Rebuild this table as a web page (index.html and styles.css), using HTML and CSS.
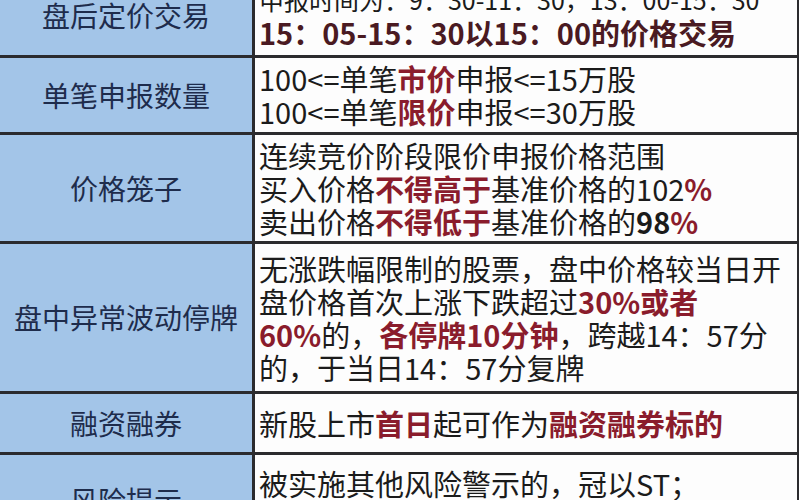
FILE: index.html
```html
<!DOCTYPE html>
<html lang="zh-CN">
<head>
<meta charset="utf-8">
<title>科创板交易规则</title>
<link rel="stylesheet" href="styles.css">
</head>
<body>
<div class="table">
  <div class="head">盘后定价交易</div>
  <div class="body">
    <div class="line small">申报时间为：9：30-11：30，13：00-15：30</div>
    <div class="line dark">15：05-15：30以15：00的价格交易</div>
  </div>

  <div class="head">单笔申报数量</div>
  <div class="body">
    <div class="line">100&lt;=单笔<b class="red">市价</b>申报&lt;=15万股</div>
    <div class="line">100&lt;=单笔<b class="red">限价</b>申报&lt;=30万股</div>
  </div>

  <div class="head">价格笼子</div>
  <div class="body">
    <div class="line">连续竞价阶段限价申报价格范围</div>
    <div class="line">买入价格<b class="red">不得高于</b>基准价格的102<b class="red">%</b></div>
    <div class="line">卖出价格<b class="red">不得低于</b>基准价格的<b>98</b><b class="red">%</b></div>
  </div>

  <div class="head">盘中异常波动停牌</div>
  <div class="body">
    <div class="line">无涨跌幅限制的股票，盘中价格较当日开</div>
    <div class="line">盘价格首次上涨下跌超过<b class="red">30%或者</b></div>
    <div class="line"><b class="red">60%</b>的，<b class="red">各停牌10分钟</b>，跨越14：57分</div>
    <div class="line">的，于当日14：57分复牌</div>
  </div>

  <div class="head">融资融券</div>
  <div class="body">
    <div class="line">新股上市<b class="red">首日</b>起可作为<b class="red">融资融券标的</b></div>
  </div>

  <div class="head">风险提示</div>
  <div class="body">
    <div class="line">被实施其他风险警示的，冠以ST；</div>
    <div class="line">被实施退市风险警示的，冠以*ST</div>
  </div>
</div>
</body>
</html>
```
FILE: styles.css
```css
html, body {
  margin: 0;
  padding: 0;
  background: #ffffff;
  overflow: hidden;
}

body {
  font-family: "Noto Sans CJK SC", "Noto Sans", sans-serif;
}

.table {
  display: grid;
  grid-template-columns: 252px 542px;
  grid-template-rows: 79px 74px 106px 147px 58px 90px;
  gap: 3px;
  width: 797px;
  padding-right: 2px;
  background: #2b2b2e;
  margin-top: -24px;
}

.head {
  display: flex;
  align-items: center;
  justify-content: center;
  background: #a3c5e8;
  color: #1e2c4c;
  font-size: 28px;
  line-height: 33px;
}

.body {
  display: flex;
  flex-direction: column;
  justify-content: center;
  padding-left: 4px;
  background: #fdfdfd;
  color: #1b1b1b;
  font-size: 29px;
  line-height: 33px;
  white-space: nowrap;
}

.line b {
  font-weight: 700;
}

.red {
  color: #8a1c2c;
}

.dark {
  font-weight: 700;
  color: #4a1a22;
}

.small {
  font-size: 25px;
}
```
